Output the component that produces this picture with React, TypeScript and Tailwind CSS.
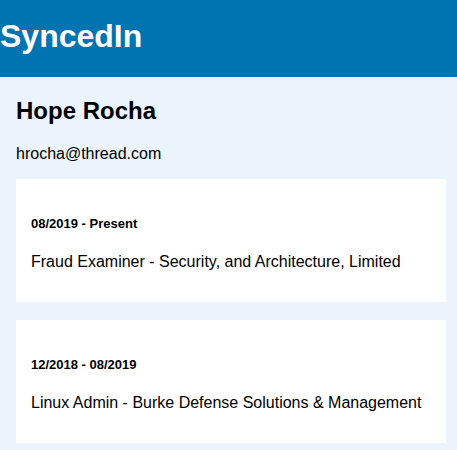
const jobs = [
  { dates: "08/2019 - Present", title: "Fraud Examiner - Security, and Architecture, Limited" },
  { dates: "12/2018 - 08/2019", title: "Linux Admin - Burke Defense Solutions & Management" },
];

export default function App() {
  return (
    <div className="min-h-screen bg-[#ebf3fd] pb-2 font-['Liberation_Sans',Arial,sans-serif] text-base leading-[18px] text-black">
      <header className="bg-[#0073b1] pt-[18px] pb-[23px]">
        <h1 className="text-[32px] leading-9 font-bold text-white">SyncedIn</h1>
      </header>
      <main className="pt-5 pr-[11px] pl-4">
        <h2 className="text-2xl leading-7 font-bold">Hope Rocha</h2>
        <p className="mt-5">hrocha@thread.com</p>
        <ul className="mt-4 flex flex-col gap-[18px]">
          {jobs.map((job) => (
            <li key={job.dates} className="bg-white px-[15px] pt-[37px] pb-[31px]">
              <h3 className="text-[13px] leading-4 font-bold">{job.dates}</h3>
              <p className="mt-[21px]">{job.title}</p>
            </li>
          ))}
        </ul>
      </main>
    </div>
  );
}
